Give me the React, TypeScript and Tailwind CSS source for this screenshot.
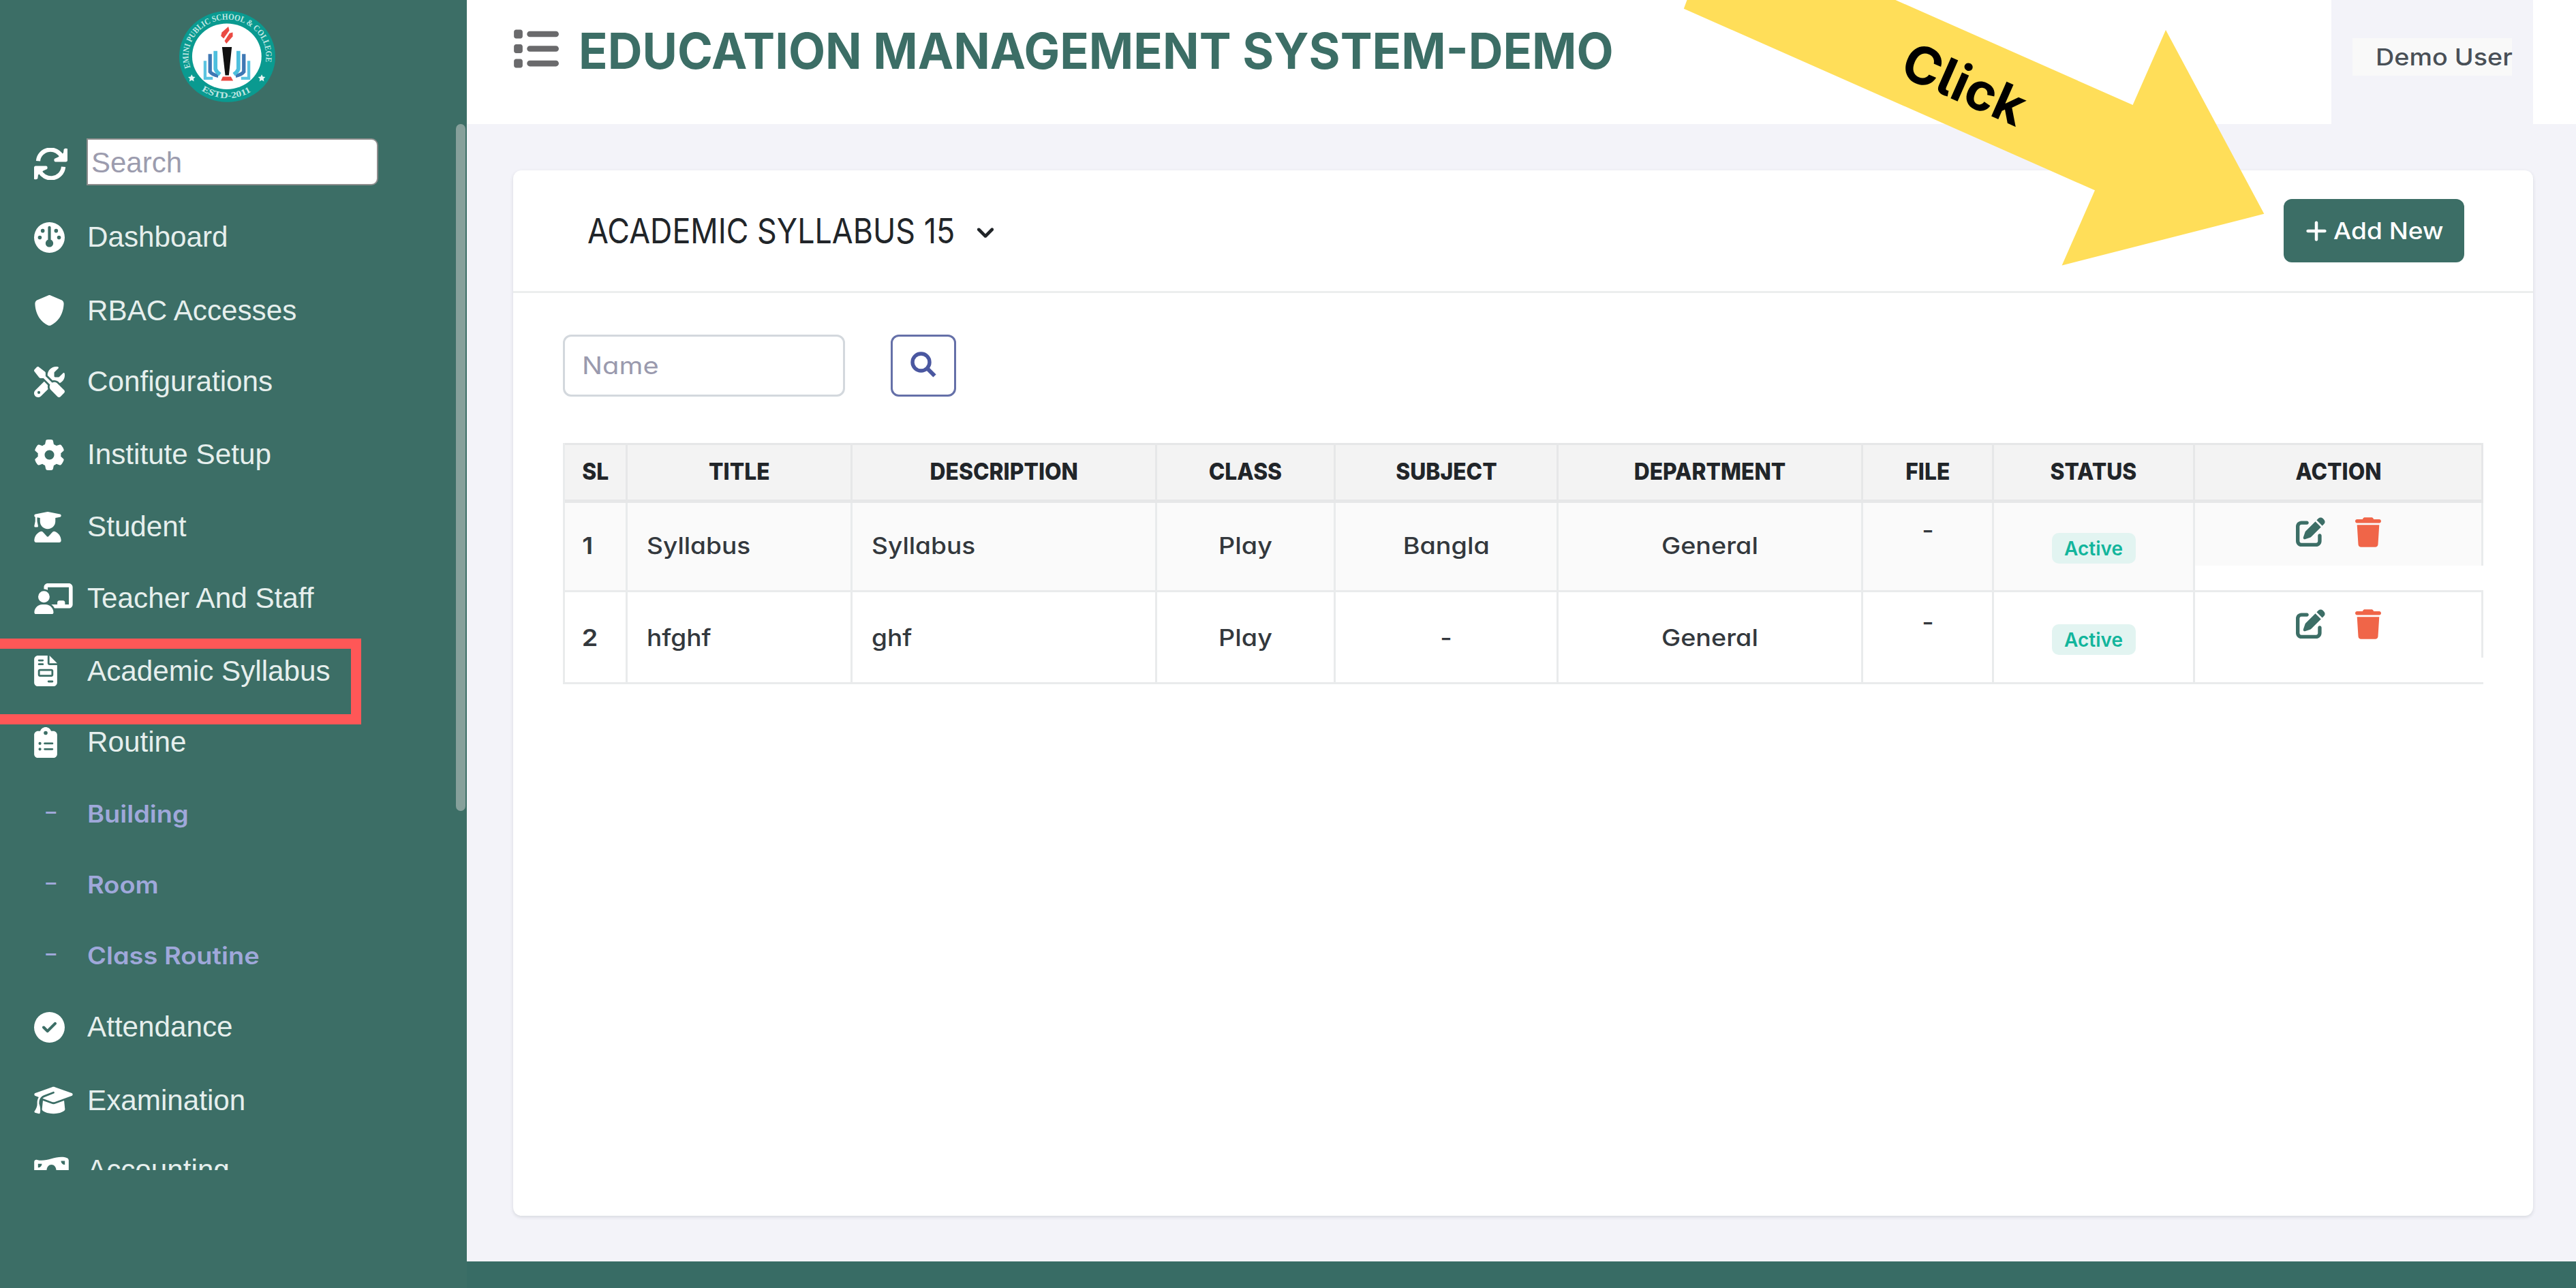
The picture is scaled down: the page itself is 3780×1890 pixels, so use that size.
import React from 'react';
import type { IconType } from 'react-icons';
import {
  FaChalkboardUser,
  FaChevronDown,
  FaCircleCheck,
  FaClipboardList,
  FaFileInvoice,
  FaGauge,
  FaGear,
  FaGraduationCap,
  FaList,
  FaMoneyBillWave,
  FaPenToSquare,
  FaPlus,
  FaScrewdriverWrench,
  FaShield,
  FaTrash,
  FaUserGraduate,
} from 'react-icons/fa6';

type MenuEntry = { label: string; icon?: IconType; iconWidth?: string; row: string };

const menu: MenuEntry[] = [
  { label: 'Dashboard', icon: FaGauge, iconWidth: 'w-[45px]', row: 'h-[107.5px]' },
  { label: 'RBAC Accesses', icon: FaShield, iconWidth: 'w-[45px]', row: 'h-[104.5px]' },
  { label: 'Configurations', icon: FaScrewdriverWrench, iconWidth: 'w-[45px]', row: 'h-[107px]' },
  { label: 'Institute Setup', icon: FaGear, iconWidth: 'w-[45px]', row: 'h-[106px]' },
  { label: 'Student', icon: FaUserGraduate, iconWidth: 'w-[40px]', row: 'h-[105px]' },
  { label: 'Teacher And Staff', icon: FaChalkboardUser, iconWidth: 'w-[57px]', row: 'h-[106.5px]' },
  { label: 'Academic Syllabus', icon: FaFileInvoice, iconWidth: 'w-[34px]', row: 'h-[104.5px]' },
  { label: 'Routine', icon: FaClipboardList, iconWidth: 'w-[34px]', row: 'h-[105px]' },
  { label: 'Building', row: 'h-[104px]' },
  { label: 'Room', row: 'h-[104px]' },
  { label: 'Class Routine', row: 'h-[105px]' },
  { label: 'Attendance', icon: FaCircleCheck, iconWidth: 'w-[45px]', row: 'h-[107.5px]' },
  { label: 'Examination', icon: FaGraduationCap, iconWidth: 'w-[57px]', row: 'h-[102.5px]' },
  { label: 'Accounting', icon: FaMoneyBillWave, iconWidth: 'w-[51px]', row: 'h-[106px]' },
];

const columns = ['SL', 'TITLE', 'DESCRIPTION', 'CLASS', 'SUBJECT', 'DEPARTMENT', 'FILE', 'STATUS', 'ACTION'];

const records = [
  { sl: '1', title: 'Syllabus', description: 'Syllabus', className: 'Play', subject: 'Bangla', department: 'General' },
  { sl: '2', title: 'hfghf', description: 'ghf', className: 'Play', subject: '-', department: 'General' },
];

const tableGrid = 'grid grid-cols-[92px_330px_447px_262px_327px_447px_192px_295px_423px]';

function Books() {
  return (
    <g fill="none">
      <path d="M114 220 V297 H148" stroke="#5bc4e0" strokeWidth="13" />
      <path d="M136 190 V268 Q146 282 172 286" stroke="#3f78b4" strokeWidth="16" />
      <path d="M160 176 V256 Q164 268 180 280" stroke="#4dbfdd" strokeWidth="17" />
    </g>
  );
}

function Logo() {
  return (
    <svg viewBox="0 0 424 402" className="h-[134px] w-[141px]">
      <ellipse cx="212" cy="201" rx="212" ry="201" fill="#0a9a90" />
      <ellipse cx="210" cy="200" rx="153" ry="145" fill="#ffffff" />
      <path id="ringTop" d="M50 250 A171 161 0 1 1 374 250" fill="none" />
      <path id="ringBottom" d="M98 350 A194 182 0 0 0 326 350" fill="none" />
      <text fontFamily="Liberation Serif" fontSize="38" fontWeight="700" fill="#bfe6e2">
        <textPath href="#ringTop" textLength="600" lengthAdjust="spacingAndGlyphs">
          EMINI PUBLIC SCHOOL &amp; COLLEGE
        </textPath>
      </text>
      <text fontFamily="Liberation Serif" fontSize="38" fontWeight="700" fill="#bfe6e2">
        <textPath href="#ringBottom" textLength="232" lengthAdjust="spacingAndGlyphs">
          ESTD-2011
        </textPath>
      </text>
      <path d="M55 280 l5 10 11 1 -8 8 2 12 -10 -6 -10 6 2 -12 -8 -8 11 -1z" fill="#e5f5f3" />
      <path d="M364 280 l5 10 11 1 -8 8 2 12 -10 -6 -10 6 2 -12 -8 -8 11 -1z" fill="#e5f5f3" />
      <Books />
      <g transform="translate(421 0) scale(-1 1)">
        <Books />
      </g>
      <path d="M189 159 H232 L219 284 H203 Z" fill="#111111" />
      <path d="M192 290 H228 L238 308 H184 Z" fill="#ea4a43" />
      <path d="M217 69 L221 86 L196 121 L184 110 L188 94 Z" fill="#ea4a43" />
      <path d="M236 94 L236 112 L208 144 L200 132 L222 98 Z" fill="#ea4a43" />
    </svg>
  );
}

function RefreshIcon() {
  return (
    <svg viewBox="0 0 148 142" className="mt-[6px] h-[47px] w-[49px]" fill="none">
      <path d="M18 58 A55 54 0 0 1 124 42" stroke="#ffffff" strokeWidth="19" />
      <path d="M130 84 A55 54 0 0 1 24 100" stroke="#ffffff" strokeWidth="19" />
      <path d="M148 4 Q139 -1 132 6 L130 22 L108 40 L90 48 Q86 60 94 62 L142 62 Q148 61 148 56 Z" fill="#ffffff" />
      <path d="M0 138 Q9 143 16 136 L18 120 L40 102 L58 94 Q62 82 54 80 L6 80 Q0 81 0 86 Z" fill="#ffffff" />
    </svg>
  );
}

function SearchIcon() {
  return (
    <svg viewBox="0 0 38 38" className="mt-[-4px] h-[38px] w-[38px]" fill="none" stroke="#4a57a0">
      <circle cx="15.5" cy="15.5" r="12.5" strokeWidth="5.4" />
      <path d="M24.5 24.5 L35.5 35.5" strokeWidth="6" />
    </svg>
  );
}

function MenuRow({ label, icon: Icon, iconWidth, row }: MenuEntry) {
  return (
    <li className={`${row} shrink-0`}>
      <div className="flex h-[106px] items-center">
        <div className="flex w-[78px] shrink-0 items-center text-white">
          {Icon ? (
            <Icon className={`h-[45px] ${iconWidth}`} />
          ) : (
            <span className="mt-[-6px] ml-[14px] inline-block origin-left scale-x-[1.3] font-['Inter'] text-[36px] leading-none text-[#9fa8da]">
              -
            </span>
          )}
        </div>
        {Icon ? (
          <span className="origin-left scale-x-[1.005] whitespace-nowrap text-[42px] leading-none text-[#e6efed]">
            {label}
          </span>
        ) : (
          <span className="origin-left scale-x-[1.085] whitespace-nowrap font-['Inter'] text-[35px] font-semibold leading-none text-[#9fa8da] [font-feature-settings:'cv11']">
            {label}
          </span>
        )}
      </div>
    </li>
  );
}

function Sidebar() {
  return (
    <aside className="relative flex w-[685px] shrink-0 flex-col bg-[#3c6e66] pl-[50px] font-['Liberation_Sans',sans-serif]">
      <div className="mt-[16px] ml-[213px]">
        <Logo />
      </div>
      <div className="mt-[53px] flex h-[69px] items-center">
        <RefreshIcon />
        <div className="ml-[28px] flex h-[69px] w-[428px] items-center rounded-r-[10px] border-2 border-[#8d8d8d] bg-white pt-[3px] pl-[5px] text-[42px] leading-none text-[#9c9cae]">
          Search
        </div>
      </div>
      <ul className="mt-[23px] flex h-[1422px] flex-col overflow-hidden">
        {menu.map((entry) => (
          <MenuRow key={entry.label} {...entry} />
        ))}
      </ul>
      <div className="absolute top-[182px] right-[2px] h-[1008px] w-[14px] rounded-[7px] bg-[#86a09b]" />
      <div className="absolute top-[937px] left-[-15px] h-[126px] w-[545px] border-[15px] border-[#ff5757]" />
    </aside>
  );
}

function Header() {
  return (
    <header className="flex h-[182px] justify-between bg-white pr-[63px]">
      <div className="flex h-[148px] items-center pl-[67px]">
        <FaList preserveAspectRatio="none" className="mt-[-6px] h-[69px] w-[68px] text-[#6a6a6c]" />
        <h1 className="ml-[29px] origin-left scale-x-[0.963] whitespace-nowrap text-[73px] font-bold leading-none text-[#3c6e66]">
          EDUCATION MANAGEMENT SYSTEM-DEMO
        </h1>
      </div>
      <div className="flex w-[296px] justify-center bg-[#f3f3f9]">
        <div className="mt-[56px] flex h-[55px] w-[234px] items-center bg-[#f9f9f9] pl-[34px]">
          <span className="origin-left scale-x-[1.11] whitespace-nowrap text-[34px] font-medium leading-none text-[#495057]">
            Demo User
          </span>
        </div>
      </div>
    </header>
  );
}

function Cell({ children, className = '' }: { children?: React.ReactNode; className?: string }) {
  return (
    <div className={`flex items-start border-r-[3px] border-[#e9ebec] ${className}`}>
      <span className="inline-block scale-x-[1.11] whitespace-nowrap leading-none">{children}</span>
    </div>
  );
}

function SyllabusTable() {
  return (
    <div className="mt-[68px] ml-[73px] w-[2818px] border-l-[3px] border-[#e9ebec] text-[34px] font-medium text-[#33383d] [font-feature-settings:'cv11']">
      <div className={`${tableGrid} h-[88px] border-t-[3px] border-b-[5px] border-[#e6e7e8] bg-[#f3f3f3]`}>
        {columns.map((name) => (
          <div
            key={name}
            className="flex items-center justify-center border-r-[3px] border-[#e6e7e8] pb-[2px] font-extrabold leading-none text-[#212529]"
          >
            <span className="scale-x-[0.935]">{name}</span>
          </div>
        ))}
      </div>
      {records.map((record, index) => {
        const textTop = index === 0 ? 'pt-[46px]' : 'pt-[50px]';
        return (
          <div
            key={record.sl}
            className={`${tableGrid} border-b-[3px] border-[#e9ebec] ${
              index === 0 ? 'h-[131px] bg-[#fafafa]' : 'h-[135px] bg-white'
            }`}
          >
            <Cell className={`${textTop} pl-[26px] font-semibold`}>{record.sl}</Cell>
            <Cell className={`${textTop} pl-[28px] [&>span]:origin-left [&>span]:scale-x-[1.09]`}>{record.title}</Cell>
            <Cell className={`${textTop} pl-[28px] [&>span]:origin-left [&>span]:scale-x-[1.09]`}>{record.description}</Cell>
            <Cell className={`${textTop} justify-center`}>{record.className}</Cell>
            <Cell className={`${textTop} justify-center`}>{record.subject}</Cell>
            <Cell className={`${textTop} justify-center`}>{record.department}</Cell>
            <Cell className={`${index === 0 ? 'pt-[23px]' : 'pt-[27px]'} justify-center`}>-</Cell>
            <div className={`flex items-start justify-center border-r-[3px] border-[#e9ebec] ${index === 0 ? 'pt-[44px]' : 'pt-[47px]'}`}>
              <div className="flex h-[45px] w-[123px] items-center justify-center rounded-[10px] bg-[#e2f4f1] text-[28px] font-semibold leading-none text-[#12b59c]">
                Active
              </div>
            </div>
            <div className="bg-white">
              <div
                className={`flex justify-center gap-[44px] border-r-[3px] border-[#e9ebec] ${
                  index === 0 ? 'h-[92px] bg-[#fafafa] pt-[21px]' : 'h-[96px] bg-white pt-[25px]'
                }`}
              >
                <FaPenToSquare className="h-[43px] w-[43px] text-[#3c6e66]" />
                <FaTrash className="h-[44px] w-[38px] text-[#f06548]" />
              </div>
            </div>
          </div>
        );
      })}
    </div>
  );
}

function Card() {
  return (
    <section className="mt-[68px] ml-[68px] h-[1534px] w-[2964px] rounded-[12px] bg-white shadow-[0_2px_5px_rgba(56,65,74,0.15)]">
      <div className="flex h-[180px] items-center justify-between border-b-[3px] border-[#eceeee] pr-[101px] pl-[109px]">
        <div className="flex items-center">
          <h2 className="w-[537px] origin-left scale-x-[0.878] whitespace-nowrap text-[51px] leading-none text-[#212529]">
            ACADEMIC SYLLABUS 15
          </h2>
          <FaChevronDown
            preserveAspectRatio="none"
            className="mt-[3px] ml-[34px] h-[26px] w-[26px] stroke-[#212529] stroke-[28] text-[#212529]"
          />
        </div>
        <button className="flex h-[93px] w-[265px] items-center rounded-[12px] bg-[#3c6e66] pl-[31px] text-white">
          <FaPlus className="h-[36px] w-[34px]" />
          <span className="ml-[8px] origin-left scale-x-[1.09] whitespace-nowrap text-[34px] font-medium leading-none">
            Add New
          </span>
        </button>
      </div>
      <div className="mt-[61px] ml-[73px] flex gap-[67px]">
        <div className="flex h-[91px] w-[414px] items-center rounded-[12px] border-[3px] border-[#d3d8dd] pl-[25px]">
          <span className="origin-left scale-x-[1.14] text-[35px] leading-none text-[#9a9aae] [font-feature-settings:'cv11']">
            Name
          </span>
        </div>
        <button className="flex h-[91px] w-[96px] items-center justify-center rounded-[12px] border-[3px] border-[#6570a8]">
          <SearchIcon />
        </button>
      </div>
      <SyllabusTable />
    </section>
  );
}

function ClickArrow() {
  return (
    <svg viewBox="2470 0 860 392" className="absolute top-0 left-[2470px] h-[392px] w-[860px]">
      <path
        d="M2475.5 0 L2470.8 12.7 L3074 279.3 L3025.6 389.5 L3322.3 313.7 L3178 44 L3129.6 154 L2781.4 0 Z"
        fill="#ffde59"
      />
      <text
        transform="translate(2785 110) rotate(23.8)"
        fontFamily="Inter"
        fontSize="76"
        fontWeight="700"
        fill="#000000"
        className="[font-feature-settings:'cv05']"
      >
        Click
      </text>
    </svg>
  );
}

export default function App() {
  return (
    <div className="relative flex h-[1890px] w-[3780px] overflow-hidden bg-[#f3f3f9] font-['Inter',sans-serif]">
      <Sidebar />
      <main className="flex grow flex-col">
        <Header />
        <Card />
        <footer className="mt-auto h-[39px] bg-[#386c65]" />
      </main>
      <ClickArrow />
    </div>
  );
}
